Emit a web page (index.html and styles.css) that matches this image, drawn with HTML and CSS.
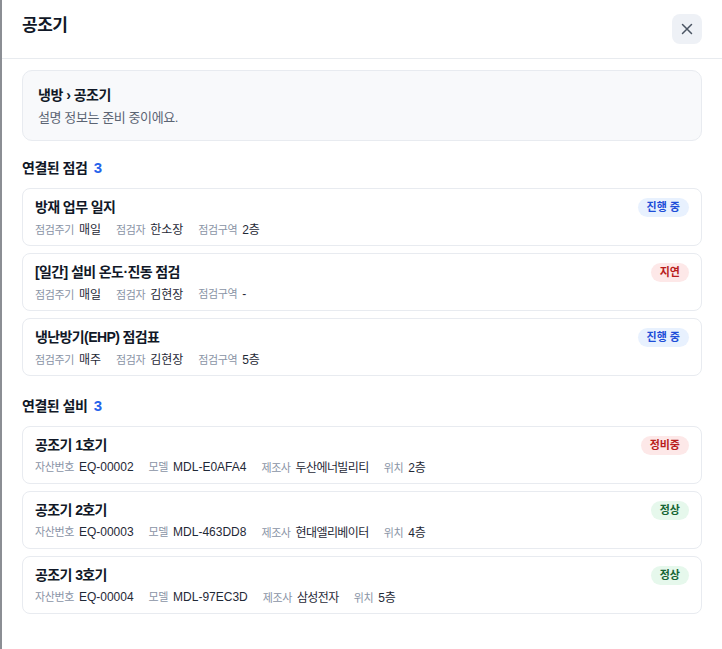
FILE: index.html
```html
<!DOCTYPE html>
<html lang="ko">
<head>
    <meta charset="UTF-8">
    <meta name="viewport" content="width=device-width, initial-scale=1.0">
    <title>공조기</title>
    <link rel="stylesheet" href="styles.css">
</head>
<body>
    <div class="backdrop"></div>

    <aside class="drawer">
        <header class="drawer-header">
            <h1>공조기</h1>
            <button class="close-btn" aria-label="닫기">
                <svg width="14" height="14" viewBox="0 0 14 14">
                    <path d="M2.5 2.5 L11.5 11.5 M11.5 2.5 L2.5 11.5" stroke="#4b5563" stroke-width="1.5" stroke-linecap="round"/>
                </svg>
            </button>
        </header>

        <div class="drawer-body">
            <div class="info-box">
                <div class="info-title">냉방 › 공조기</div>
                <div class="info-desc">설명 정보는 준비 중이에요.</div>
            </div>

            <h2 class="section-title">연결된 점검 <span class="count">3</span></h2>
            <div class="card-list">
                <div class="card">
                    <div class="card-top">
                        <div class="card-title">방재 업무 일지</div>
                        <span class="badge blue">진행 중</span>
                    </div>
                    <div class="meta">
                        <span><em>점검주기</em>매일</span>
                        <span><em>점검자</em>한소장</span>
                        <span><em>점검구역</em>2층</span>
                    </div>
                </div>
                <div class="card">
                    <div class="card-top">
                        <div class="card-title">[일간] 설비 온도·진동 점검</div>
                        <span class="badge red">지연</span>
                    </div>
                    <div class="meta">
                        <span><em>점검주기</em>매일</span>
                        <span><em>점검자</em>김현장</span>
                        <span><em>점검구역</em>-</span>
                    </div>
                </div>
                <div class="card">
                    <div class="card-top">
                        <div class="card-title">냉난방기(EHP) 점검표</div>
                        <span class="badge blue">진행 중</span>
                    </div>
                    <div class="meta">
                        <span><em>점검주기</em>매주</span>
                        <span><em>점검자</em>김현장</span>
                        <span><em>점검구역</em>5층</span>
                    </div>
                </div>
            </div>

            <h2 class="section-title">연결된 설비 <span class="count">3</span></h2>
            <div class="card-list">
                <div class="card">
                    <div class="card-top">
                        <div class="card-title">공조기 1호기</div>
                        <span class="badge red">정비중</span>
                    </div>
                    <div class="meta">
                        <span><em>자산번호</em>EQ-00002</span>
                        <span><em>모델</em>MDL-E0AFA4</span>
                        <span><em>제조사</em><b>두산에너빌리티</b></span>
                        <span><em>위치</em>2층</span>
                    </div>
                </div>
                <div class="card">
                    <div class="card-top">
                        <div class="card-title">공조기 2호기</div>
                        <span class="badge green">정상</span>
                    </div>
                    <div class="meta">
                        <span><em>자산번호</em>EQ-00003</span>
                        <span><em>모델</em>MDL-463DD8</span>
                        <span><em>제조사</em><b>현대엘리베이터</b></span>
                        <span><em>위치</em>4층</span>
                    </div>
                </div>
                <div class="card">
                    <div class="card-top">
                        <div class="card-title">공조기 3호기</div>
                        <span class="badge green">정상</span>
                    </div>
                    <div class="meta">
                        <span><em>자산번호</em>EQ-00004</span>
                        <span><em>모델</em>MDL-97EC3D</span>
                        <span><em>제조사</em><b>삼성전자</b></span>
                        <span><em>위치</em>5층</span>
                    </div>
                </div>
            </div>
        </div>
    </aside>
</body>
</html>
```

FILE: styles.css
```css
body {
    margin: 0;
    padding: 0;
    display: flex;
    min-height: 100vh;
    font-family: "Liberation Sans", "Noto Sans CJK KR", sans-serif;
    color: #1f2937;
    background: #ffffff;
}

.backdrop {
    width: 2px;
    flex-shrink: 0;
    background: #8b8e94;
}

.drawer {
    flex: 1;
    background: #ffffff;
}

.drawer-header {
    height: 58px;
    display: flex;
    align-items: center;
    justify-content: space-between;
    padding: 0 20px;
    border-bottom: 1px solid #e8ebef;
}

.drawer-header h1 {
    margin: -12px 0 0 0;
    font-size: 17px;
    font-weight: 700;
    letter-spacing: -0.5px;
    color: #111827;
}

.close-btn {
    width: 30px;
    height: 30px;
    border: none;
    border-radius: 8px;
    background: #eef1f6;
    display: flex;
    align-items: center;
    justify-content: center;
    padding: 0;
    cursor: pointer;
}

.drawer-body {
    padding: 11px 20px 20px 20px;
}

.info-box {
    background: #f8f9fb;
    border: 1px solid #e8ebf0;
    border-radius: 10px;
    padding: 13px 15px 14px 15px;
}

.info-title {
    font-size: 14px;
    font-weight: 700;
    letter-spacing: -0.5px;
    color: #111827;
}

.info-desc {
    margin-top: 3px;
    font-size: 13px;
    letter-spacing: -0.4px;
    color: #5b6473;
}

.section-title {
    margin: 17px 0 10px 0;
    font-size: 14px;
    font-weight: 700;
    letter-spacing: -0.5px;
    color: #111827;
    line-height: 20px;
}

.section-title .count {
    color: #2563eb;
    font-size: 15px;
    margin-left: 3px;
}

.card-list {
    display: flex;
    flex-direction: column;
    gap: 7px;
}

.card-list + .section-title {
    margin-top: 20px;
}

.card {
    border: 1px solid #e8ebf0;
    border-radius: 8px;
    padding: 8px 12px 10px 12px;
    height: 38px;
}

.card-top {
    display: flex;
    justify-content: space-between;
    align-items: flex-start;
}

.card-title {
    font-size: 14px;
    font-weight: 700;
    letter-spacing: -0.6px;
    color: #111827;
    line-height: 20px;
}

.badge {
    font-size: 11px;
    font-weight: 700;
    line-height: 19px;
    height: 19px;
    padding: 0 9px;
    margin-top: 1px;
    border-radius: 10px;
}

.badge.blue {
    background: #e8f1fe;
    color: #1d4ed8;
}

.badge.red {
    background: #fde8e8;
    color: #b91c1c;
}

.badge.green {
    background: #e6f8ec;
    color: #166534;
}

.meta {
    display: flex;
    gap: 15px;
    font-size: 12px;
    margin-top: 3px;
    color: #1f2937;
}

.meta em {
    font-style: normal;
    color: #8a94a6;
    font-size: 11px;
    letter-spacing: -0.4px;
    margin-right: 5px;
}

.meta b {
    font-weight: 400;
    letter-spacing: -0.6px;
}
```
